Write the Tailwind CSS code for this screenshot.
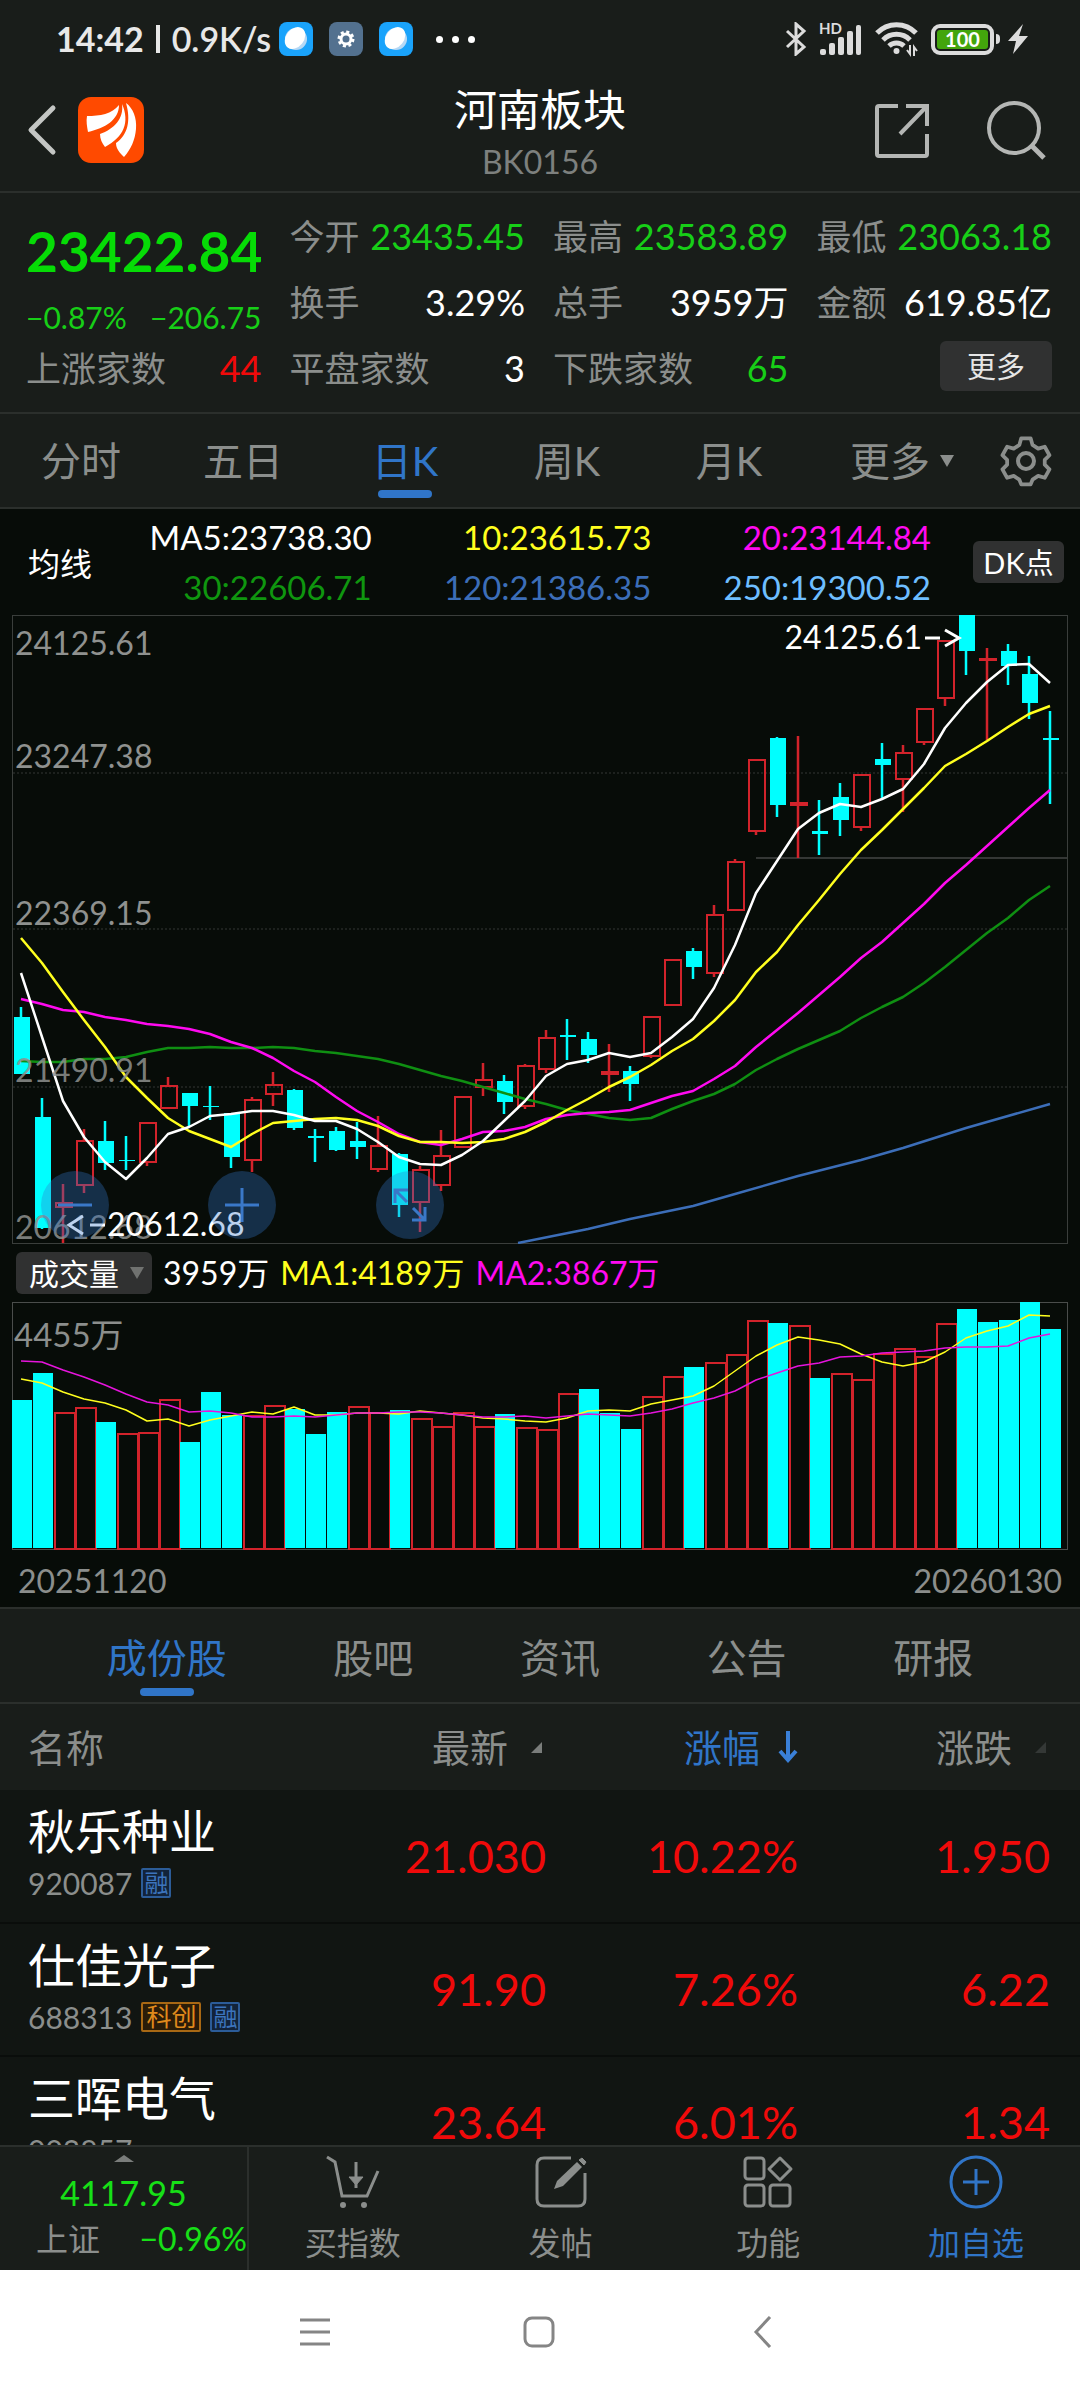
<!DOCTYPE html>
<html lang="zh-CN">

<head>
    <meta charset="UTF-8">
    <meta name="viewport" content="width=device-width, initial-scale=1.0">
    <title>河南板块 BK0156</title>
    <script src="https://cdn.jsdelivr.net/npm/@tailwindcss/browser@4"></script>
</head>

<body class="flex h-screen flex-col overflow-hidden bg-[#191d1a] font-['Lato','Noto_Sans_CJK_SC',sans-serif] leading-none text-[#8b8e8c]">

    <!-- Status bar -->
    <div class="flex h-[78px] shrink-0 items-center justify-between pr-[52px] pl-[56px] text-[#e8e8e8]">
        <div class="flex items-center">
            <span class="text-[34px] font-bold">14:42</span>
            <span class="mx-3 h-[28px] w-[4px] bg-[#e8e8e8]"></span>
            <span class="text-[34px] font-semibold">0.9K/s</span>
            <div class="ml-2 flex items-center gap-4">
                <svg class="size-[34px]" viewBox="0 0 34 34">
                    <rect width="34" height="34" rx="8" fill="#1aa3fb" />
                    <circle cx="17" cy="17" r="11" fill="#b5d8f5" />
                    <ellipse cx="16" cy="16" rx="9" ry="12" fill="#fff" transform="rotate(38 16 16)" />
                </svg>
                <svg class="size-[34px]" viewBox="0 0 34 34">
                    <rect width="34" height="34" rx="8" fill="#53718f" />
                    <circle cx="17" cy="17" r="5" fill="none" stroke="#fff" stroke-width="3" />
                    <circle cx="17" cy="17" r="7" fill="none" stroke="#fff" stroke-width="3" stroke-dasharray="3 2.5" />
                </svg>
                <svg class="size-[34px]" viewBox="0 0 34 34">
                    <rect width="34" height="34" rx="8" fill="#1aa3fb" />
                    <circle cx="17" cy="17" r="11" fill="#b5d8f5" />
                    <ellipse cx="16" cy="16" rx="9" ry="12" fill="#fff" transform="rotate(38 16 16)" />
                </svg>
            </div>
            <div class="ml-[23px] flex gap-[9px]">
                <span class="size-[7px] rounded-full bg-white"></span>
                <span class="size-[7px] rounded-full bg-white"></span>
                <span class="size-[7px] rounded-full bg-white"></span>
            </div>
        </div>
        <div class="flex items-center">
            <svg class="h-[34px] w-[22px]" viewBox="0 0 22 34" fill="none" stroke="#dcdcdc" stroke-width="3">
                <path d="M2 9l17 16-8 7V2l8 7L2 25" />
            </svg>
            <svg class="ml-3 h-[40px] w-[44px]" viewBox="0 0 44 40" fill="#dcdcdc">
                <text x="0" y="15" font-size="15" font-weight="700">HD</text>
                <rect x="1" y="30" width="6" height="6" rx="2" />
                <rect x="10" y="24" width="6" height="12" rx="2" />
                <rect x="19" y="18" width="6" height="18" rx="2" />
                <rect x="28" y="12" width="6" height="24" rx="2" />
                <rect x="37" y="6" width="5" height="30" rx="2" />
            </svg>
            <svg class="ml-3 h-[36px] w-[44px]" viewBox="0 0 44 36" fill="none" stroke="#dcdcdc" stroke-width="5">
                <path d="M2 12a27 27 0 0 1 39 0M8 19a19 19 0 0 1 27 0M14 25a11 11 0 0 1 15 0" />
                <circle cx="21.500" cy="30" r="2" fill="#dcdcdc" stroke-width="2" />
                <path d="M35 24v9l-3-4M39 35v-9l3 4" stroke-width="2" />
            </svg>
            <div class="ml-3 flex items-center">
                <div class="flex h-[31px] w-[63px] items-center justify-center rounded-[9px] border-[4px] border-[#dcdcdc] p-[2px]">
                    <div class="flex h-full w-full items-center justify-center rounded-[3px] bg-[#43a50c] text-[20px] font-bold text-white">100</div>
                </div>
                <span class="ml-[2px] h-[10px] w-[4px] rounded-r bg-[#dcdcdc]"></span>
            </div>
            <svg class="ml-2 h-[30px] w-[20px]" viewBox="0 0 20 30" fill="#dcdcdc">
                <path d="M15 0L0 17h8L5 30 20 12h-9z" />
            </svg>
        </div>
    </div>

    <!-- Title bar -->
    <header class="relative flex h-[115px] shrink-0 items-center justify-between border-b-2 border-[#2b2f2c] pr-[34px] pb-[9px] pl-[26px]">
        <div class="flex items-center gap-[20px]">
            <button type="button" aria-label="返回">
                <svg class="h-[54px] w-[32px]" viewBox="0 0 32 54" fill="none" stroke="#c4c6c4" stroke-width="5" stroke-linecap="round" stroke-linejoin="round">
                    <path d="M27 5L5 27l22 22" />
                </svg>
            </button>
            <a href="#" aria-label="首页">
                <svg class="size-[66px]" viewBox="0 0 66 66">
                    <rect width="66" height="66" rx="13" fill="#ff4a00" />
                    <g fill="#fff">
                        <path d="M9 19c13 0 25-2 32-11 0 15-14 23-31 27-1-5-2-11-1-16z" />
                        <path d="M44 7c8 18 2 33-17 43-3-4-5-8-5-13 14-5 24-15 22-30z" />
                        <path d="M48 6c7 5 11 15 10 26-1 11-5 20-12 28-4-4-8-8-8-14 12-8 15-23 10-40z" />
                    </g>
                </svg>
            </a>
        </div>
        <div class="absolute inset-x-0 top-[8px] flex flex-col items-center gap-[12px]">
            <h1 class="text-[43px] leading-[48px] text-white">河南板块</h1>
            <p class="text-[32px] leading-[32px] text-[#7d807e]">BK0156</p>
        </div>
        <div class="relative flex items-center gap-[56px]">
            <button type="button" aria-label="分享">
                <svg class="size-[56px]" viewBox="0 0 56 56" fill="none" stroke="#b4b6b4" stroke-width="4">
                    <path d="M24 4H5q-2 0-2 2v46q0 2 2 2h46q2 0 2-2V32M32 4h21v20M53 4L26 32" />
                </svg>
            </button>
            <button type="button" aria-label="搜索">
                <svg class="size-[60px]" viewBox="0 0 60 60" fill="none" stroke="#b4b6b4" stroke-width="4">
                    <circle cx="28" cy="28" r="25" />
                    <path d="M46 46l12 12" stroke-width="5" />
                </svg>
            </button>
        </div>
    </header>

    <!-- Quote -->
    <section class="grid h-[221px] shrink-0 grid-cols-4 gap-x-[28px] border-b-2 border-[#2b2f2c] pt-[10px] pr-[28px] pl-[26px] text-[35px]">
        <div class="flex flex-col">
            <div class="flex h-[96px] items-center text-[55px] font-bold text-[#06dc06]">23422.84</div>
            <div class="flex h-[36px] items-center justify-between text-[30px] text-[#17cf17]"><span>−0.87%</span><span>−206.75</span></div>
            <div class="flex h-[66px] items-center justify-between"><span>上涨家数</span><span class="text-[36px] text-[#f00a0a]">44</span></div>
        </div>
        <div class="flex flex-col">
            <div class="flex h-[66px] items-center justify-between"><span>今开</span><span class="text-[36px] text-[#17cf17]">23435.45</span></div>
            <div class="flex h-[66px] items-center justify-between"><span>换手</span><span class="text-[36px] text-white">3.29%</span></div>
            <div class="flex h-[66px] items-center justify-between"><span>平盘家数</span><span class="text-[36px] text-white">3</span></div>
        </div>
        <div class="flex flex-col">
            <div class="flex h-[66px] items-center justify-between"><span>最高</span><span class="text-[36px] text-[#17cf17]">23583.89</span></div>
            <div class="flex h-[66px] items-center justify-between"><span>总手</span><span class="text-[36px] text-white">3959<span class="text-[35px]">万</span></span></div>
            <div class="flex h-[66px] items-center justify-between"><span>下跌家数</span><span class="text-[36px] text-[#17cf17]">65</span></div>
        </div>
        <div class="flex flex-col">
            <div class="flex h-[66px] items-center justify-between"><span>最低</span><span class="text-[36px] text-[#17cf17]">23063.18</span></div>
            <div class="flex h-[66px] items-center justify-between"><span>金额</span><span class="text-[36px] text-white">619.85<span class="text-[35px]">亿</span></span></div>
            <div class="flex h-[62px] items-center justify-end">
                <button type="button" class="h-[50px] w-[112px] rounded-md bg-[#303131] text-[29px] text-[#e6e6e6]">更多</button>
            </div>
        </div>
    </section>

    <!-- Period tabs -->
    <nav class="flex h-[95px] shrink-0 items-stretch border-b-2 border-[#2b2f2c] text-[40px]">
        <div class="grid w-3/4 grid-cols-5">
            <button type="button">分时</button>
            <button type="button">五日</button>
            <button type="button" class="relative text-[#3075c8]">日K<span class="absolute inset-x-0 bottom-[9px] mx-auto h-[8px] w-[54px] rounded-full bg-[#3075c8]"></span></button>
            <button type="button">周K</button>
            <button type="button">月K</button>
        </div>
        <div class="flex flex-1 items-center justify-between pr-[28px] pl-[40px]">
            <button type="button" class="flex items-center gap-[10px]">更多
                <svg class="h-[12px] w-[14px]" viewBox="0 0 14 12" fill="#8b8e8c"><path d="M0 0h14L7 12z" /></svg>
            </button>
            <button type="button" aria-label="设置">
                <svg class="size-[52px]" viewBox="0 0 52 52" fill="none" stroke="#8b8e8c" stroke-width="4" stroke-linejoin="round">
                    <path d="M21 3h10l2 7 6 4 7-2 5 9-5 5v5l5 5-5 9-7-2-6 4-2 5H21l-2-5-6-4-7 2-5-9 5-5v-5l-5-5 5-9 7 2 6-4z" transform="translate(1.500 .5) scale(.94)" />
                    <circle cx="26" cy="26" r="8" />
                </svg>
            </button>
        </div>
    </nav>

    <main class="shrink-0 bg-[#070c08]">
        <!-- Moving averages -->
        <div class="flex h-[106px] items-center pr-[16px] pl-[28px] text-[33px]">
            <div class="w-[64px] pt-1 text-[32px] whitespace-nowrap text-white">均线</div>
            <div class="grid flex-1 grid-cols-3 text-right">
                <span class="leading-[50px] text-white">MA5:23738.30</span>
                <span class="leading-[50px] text-[#ffff1e]">10:23615.73</span>
                <span class="leading-[50px] text-[#ff0af0]">20:23144.84</span>
                <span class="leading-[50px] text-[#0f960f]">30:22606.71</span>
                <span class="leading-[50px] text-[#3c6eb8]">120:21386.35</span>
                <span class="leading-[50px] text-[#6ebeff]">250:19300.52</span>
            </div>
            <button type="button" class="ml-[42px] h-[42px] w-[91px] rounded-md bg-[#303131] text-[29px] text-white">DK点</button>
        </div>

        <!-- K-line chart -->
        <div class="relative">
            <svg id="kline" class="block h-auto w-full" viewBox="0 0 1080 629" fill="none">
                <rect x="12.500" y=".5" width="1055" height="628" stroke="#3a3e3b" />
                <path d="M13 158H1067M13 314H1067M13 472H1067" stroke="#1d211e" stroke-width="2" stroke-dasharray="2 2" />
                <path d="M756 243H1067" stroke="#343735" stroke-width="2" />
                <g id="candles"></g>
                <g id="averages" stroke-width="2.500" stroke-linejoin="round"></g>
                <g fill="#8f918f" font-size="32">
                    <text x="15" y="40">24125.61</text>
                    <text x="15" y="153">23247.38</text>
                    <text x="15" y="310">22369.15</text>
                    <text x="15" y="467" fill-opacity=".85">21490.91</text>
                    <text x="15" y="624" fill-opacity=".85">20612.68</text>
                </g>
                <g fill="#fff" font-size="32">
                    <text x="922" y="34" text-anchor="end">24125.61</text>
                    <text x="107" y="621">20612.68</text>
                </g>
                <path d="M925 23h15M945 15l14 8-14 8M105 610H90M83 601l-14 9 14 9" stroke="#fff" stroke-width="3" />
            </svg>
            <div class="absolute bottom-[5px] left-[41px] flex">
                <button type="button" aria-label="缩小" class="flex size-[68px] items-center justify-center rounded-full bg-[#3377cc]/33">
                    <svg class="size-[34px]" viewBox="0 0 34 34" stroke="#3a78c8" stroke-width="3"><path d="M0 17h34" /></svg>
                </button>
                <button type="button" aria-label="放大" class="ml-[99px] flex size-[68px] items-center justify-center rounded-full bg-[#3377cc]/33">
                    <svg class="size-[34px]" viewBox="0 0 34 34" stroke="#3a78c8" stroke-width="3"><path d="M0 17h34M17 0v34" /></svg>
                </button>
                <button type="button" aria-label="全屏" class="ml-[100px] flex size-[68px] items-center justify-center rounded-full bg-[#3377cc]/33">
                    <svg class="size-[34px]" viewBox="0 0 34 34" fill="none" stroke="#3a78c8" stroke-width="3"><path d="M2 15V2h13M2 2l12 12M32 19v13H19M32 32L20 20" /></svg>
                </button>
            </div>
        </div>

        <!-- Volume -->
        <div class="flex h-[58px] items-center gap-[11px] pl-[16px] text-[32px]">
            <div class="relative">
                <select aria-label="指标" class="block h-[42px] w-[136px] appearance-none rounded-md bg-[#303131] pl-[13px] text-[30px] leading-[42px] text-white">
                    <option>成交量</option>
                    <option>MACD</option>
                    <option>KDJ</option>
                </select>
                <svg class="pointer-events-none absolute top-[15px] right-[8px] h-[12px] w-[14px]" viewBox="0 0 14 12" fill="#707270"><path d="M0 0h14L7 12z" /></svg>
            </div>
            <span class="text-white">3959万</span>
            <span class="text-[#ffff1e]">MA1:4189万</span>
            <span class="text-[#ff0af0]">MA2:3867万</span>
        </div>
        <svg id="volume" class="block h-auto w-full" viewBox="0 0 1080 248" fill="none">
            <rect x="12.500" y=".5" width="1055" height="247" stroke="#4a4d4b" />
            <g id="bars"></g>
            <g id="volume-averages" stroke-width="1.500" stroke-linejoin="round"></g>
            <text x="14" y="45" font-size="33" fill="#8b8e8c">4455万</text>
        </svg>
        <div class="flex h-[59px] items-center justify-between border-b-2 border-[#2b2f2c] px-[18px] pt-1 text-[32px]">
            <span>20251120</span>
            <span>20260130</span>
        </div>
    </main>

    <!-- Section tabs -->
    <nav class="flex h-[95px] shrink-0 justify-evenly border-b-2 border-[#2b2f2c] text-[40px]">
        <button type="button" class="relative pt-1 text-[#3075c8]">成份股<span class="absolute inset-x-0 bottom-[6px] mx-auto h-[8px] w-[54px] rounded-full bg-[#3075c8]"></span></button>
        <button type="button" class="pt-1">股吧</button>
        <button type="button" class="pt-1">资讯</button>
        <button type="button" class="pt-1">公告</button>
        <button type="button" class="pt-1">研报</button>
    </nav>

    <!-- Constituent stocks -->
    <div class="min-h-0 flex-1 overflow-hidden bg-[#111512]">
        <table class="w-full table-fixed border-collapse text-right text-[45px] text-[#f00a0a]">
            <thead class="bg-[#191d1a] text-[38px] text-[#8b8e8c]">
                <tr class="h-[86px]">
                    <th class="w-[30%] pl-[28px] text-left font-normal">名称</th>
                    <th class="pr-[34px] font-normal">
                        <button type="button" class="inline-flex items-center gap-[23px]">最新<svg class="size-[11px]" viewBox="0 0 11 11" fill="#7a7d7b"><path d="M11 0v11H0z" /></svg></button>
                    </th>
                    <th class="pr-[30px] font-normal text-[#3075c8]">
                        <button type="button" class="inline-flex items-center gap-[18px]">涨幅<svg class="h-[32px] w-[20px]" viewBox="0 0 20 32" fill="none" stroke="#3a80d8" stroke-width="4"><path d="M10 0v28M2 20l8 9 8-9" /></svg></button>
                    </th>
                    <th class="pr-[34px] font-normal">
                        <button type="button" class="inline-flex items-center gap-[23px]">涨跌<svg class="size-[11px]" viewBox="0 0 11 11" fill="#343836"><path d="M11 0v11H0z" /></svg></button>
                    </th>
                </tr>
            </thead>
            <tbody>
                <tr class="h-[133px] border-b-2 border-[#0a0d0b]">
                    <td class="pl-[28px] text-left">
                        <div class="text-[47px] leading-[56px] text-white">秋乐种业</div>
                        <div class="mt-[9px] mb-[11px] flex h-[30px] items-center gap-[9px] text-[30px] text-[#8b8e8c]">920087
                            <span class="flex size-[30px] items-center justify-center rounded-xs border-2 border-[#2c5c98] bg-[#12233a] text-[24px] text-[#3c74bc]">融</span>
                        </div>
                    </td>
                    <td class="pr-[30px]">21.030</td>
                    <td class="pr-[30px]">10.22%</td>
                    <td class="pr-[30px]">1.950</td>
                </tr>
                <tr class="h-[133px] border-b-2 border-[#0a0d0b]">
                    <td class="pl-[28px] text-left">
                        <div class="text-[47px] leading-[56px] text-white">仕佳光子</div>
                        <div class="mt-[9px] mb-[11px] flex h-[30px] items-center gap-[9px] text-[30px] text-[#8b8e8c]">688313
                            <span class="flex h-[30px] w-[60px] items-center justify-center rounded-xs border-2 border-[#a86814] bg-[#2a1c08] text-[25px] text-[#e08a1c]">科创</span>
                            <span class="flex size-[30px] items-center justify-center rounded-xs border-2 border-[#2c5c98] bg-[#12233a] text-[24px] text-[#3c74bc]">融</span>
                        </div>
                    </td>
                    <td class="pr-[30px]">91.90</td>
                    <td class="pr-[30px]">7.26%</td>
                    <td class="pr-[30px]">6.22</td>
                </tr>
                <tr class="h-[133px] border-b-2 border-[#0a0d0b]">
                    <td class="pl-[28px] text-left">
                        <div class="text-[47px] leading-[56px] text-white">三晖电气</div>
                        <div class="mt-[9px] mb-[11px] flex h-[30px] items-center gap-[9px] text-[30px] text-[#8b8e8c]">002857</div>
                    </td>
                    <td class="pr-[30px]">23.64</td>
                    <td class="pr-[30px]">6.01%</td>
                    <td class="pr-[30px]">1.34</td>
                </tr>
            </tbody>
        </table>
    </div>

    <!-- Action bar -->
    <footer class="flex h-[125px] shrink-0 border-t-2 border-[#2b2f2c] text-[32px]">
        <a href="#" class="flex w-[249px] flex-col items-center border-r-2 border-[#2b2f2c] pt-[8px]">
            <svg class="h-[7px] w-[20px]" viewBox="0 0 20 7" fill="#7a7d7b"><path d="M10 0l10 7H0z" /></svg>
            <span class="mt-[13px] text-[34px] leading-[36px] text-[#17e017]">4117.95</span>
            <span class="flex h-[56px] w-full items-center justify-between pl-[36px] whitespace-nowrap"><span>上证</span><span class="text-[32px] text-[#17e017]">−0.96%</span></span>
        </a>
        <div class="grid flex-1 grid-cols-4">
            <button type="button" class="flex flex-col items-center gap-[15px] pt-[8px]">
                <svg class="size-[54px]" viewBox="0 0 54 54" fill="none" stroke="#8b8e8c" stroke-width="3">
                    <path d="M1 2l8 5 7 34h25l11-25M30 7v26" />
                    <path d="M23 22l7 8 7-8z" fill="#8b8e8c" stroke-width="1" />
                    <circle cx="17" cy="50" r="3" fill="#8b8e8c" stroke="none" />
                    <circle cx="38" cy="50" r="3" fill="#8b8e8c" stroke="none" />
                </svg>
                <span class="leading-[38px]">买指数</span>
            </button>
            <button type="button" class="flex flex-col items-center gap-[15px] pt-[8px]">
                <svg class="size-[54px]" viewBox="0 0 54 54" fill="none" stroke="#8b8e8c" stroke-width="3">
                    <path d="M37 3H10q-7 0-7 7v34q0 7 7 7h34q7 0 7-7V18" />
                    <path d="M20 34l3-8L43 7l5 5-19 19z" fill="#8b8e8c" stroke="none" />
                    <path d="M45 5l5 5 2-3-4-4z" fill="#8b8e8c" stroke-width="1" />
                </svg>
                <span class="leading-[38px]">发帖</span>
            </button>
            <button type="button" class="flex flex-col items-center gap-[15px] pt-[8px]">
                <svg class="size-[54px]" viewBox="0 0 54 54" fill="none" stroke="#8b8e8c" stroke-width="3">
                    <rect x="4" y="3" width="19" height="21" rx="3" />
                    <rect x="4" y="30" width="19" height="21" rx="3" />
                    <rect x="29" y="30" width="20" height="21" rx="3" />
                    <path d="M39 3l11 11-11 11-11-11z" stroke-linejoin="round" />
                </svg>
                <span class="leading-[38px]">功能</span>
            </button>
            <button type="button" class="flex flex-col items-center gap-[15px] pt-[8px] text-[#3075c8]">
                <svg class="size-[54px]" viewBox="0 0 54 54" fill="none" stroke="#3075c8" stroke-width="3">
                    <circle cx="27" cy="27" r="25" />
                    <path d="M14 27h26M27 14v26" />
                </svg>
                <span class="leading-[38px]">加自选</span>
            </button>
        </div>
    </footer>

    <!-- System navigation -->
    <div class="flex h-[130px] shrink-0 items-center justify-center gap-[192px] bg-white pr-[2px] pb-[6px]">
        <button type="button" aria-label="最近任务">
            <svg class="size-[32px]" viewBox="0 0 32 32" stroke="#858585" stroke-width="3"><path d="M1 4h30M1 16h30M1 28h30" /></svg>
        </button>
        <button type="button" aria-label="主屏幕">
            <svg class="size-[32px]" viewBox="0 0 32 32" fill="none" stroke="#858585" stroke-width="3"><rect x="2" y="2" width="28" height="28" rx="7" /></svg>
        </button>
        <button type="button" aria-label="后退">
            <svg class="size-[32px]" viewBox="0 0 32 32" fill="none" stroke="#858585" stroke-width="3"><path d="M23 1L9 16l14 15" /></svg>
        </button>
    </div>

    <script>
        const STEP = 21;
        const UP = '#d2232b';
        const DOWN = '#00ffff';

        // [direction, body top, body bottom, high, low]
        const candles = [
            ['d', 402, 459, 392, 459], ['d', 502, 613, 483, 614], ['u', 587, 593, 569, 628], ['u', 525, 571, 514, 578],
            ['d', 526, 548, 506, 555], ['d', 545, 546, 521, 555], ['u', 507, 548, 507, 551], ['u', 470, 494, 462, 494],
            ['d', 478, 491, 478, 512], ['d', 491, 492, 471, 505], ['d', 498, 542, 498, 553], ['u', 484, 546, 482, 557],
            ['u', 469, 480, 457, 491], ['d', 475, 513, 474, 515], ['d', 521, 523, 514, 547], ['d', 516, 535, 512, 536],
            ['d', 526, 532, 507, 544], ['u', 530, 555, 501, 557], ['d', 539, 590, 538, 602], ['u', 554, 588, 551, 617],
            ['u', 540, 571, 515, 576], ['u', 481, 533, 481, 533], ['u', 464, 473, 448, 481], ['d', 466, 487, 460, 499],
            ['u', 450, 492, 449, 494], ['u', 422, 455, 415, 458], ['d', 420, 422, 404, 445], ['d', 424, 440, 417, 448],
            ['u', 456, 460, 429, 477], ['d', 456, 469, 451, 486], ['u', 401, 442, 401, 443], ['u', 344, 391, 344, 391],
            ['d', 336, 352, 333, 364], ['u', 299, 359, 290, 362], ['u', 246, 296, 244, 296], ['u', 144, 217, 144, 220],
            ['d', 123, 190, 122, 202], ['u', 187, 191, 121, 243], ['d', 216, 219, 185, 240], ['d', 182, 205, 168, 221],
            ['u', 159, 213, 159, 216], ['d', 144, 150, 128, 183], ['u', 137, 165, 130, 197], ['u', 93, 128, 93, 130],
            ['u', 25, 84, 25, 91], ['d', 0, 36, 0, 60], ['u', 43, 46, 33, 125], ['d', 36, 51, 29, 70],
            ['d', 59, 88, 41, 104], ['d', 123, 125, 96, 189],
        ];

        const averages = {
            '#0f8f12': [446, 447, 447, 444, 444, 442, 437, 433, 433, 432, 433, 433, 432, 433, 436, 438, 441, 444, 449, 455, 461, 466, 472, 478, 484, 489, 495, 499, 503, 505, 503, 494, 486, 479, 469, 455, 444, 434, 425, 416, 403, 392, 382, 368, 352, 335, 318, 303, 285, 271],
            '#ff0af0': [384, 389, 395, 397, 402, 405, 409, 411, 414, 419, 427, 433, 443, 456, 467, 482, 496, 507, 519, 527, 530, 524, 517, 516, 512, 504, 500, 498, 497, 495, 488, 481, 476, 464, 451, 432, 415, 398, 380, 362, 343, 327, 308, 289, 268, 250, 231, 212, 193, 175],
            '#ffff1e': [323, 348, 377, 405, 432, 462, 483, 503, 516, 524, 532, 519, 508, 506, 504, 503, 505, 511, 521, 527, 527, 528, 527, 524, 517, 507, 495, 484, 472, 462, 450, 436, 424, 406, 385, 357, 337, 310, 285, 259, 235, 215, 194, 173, 151, 139, 126, 112, 99, 91],
            '#ffffff': [358, 422, 486, 522, 547, 564, 543, 519, 512, 501, 499, 496, 496, 500, 506, 506, 514, 527, 542, 549, 550, 540, 526, 506, 486, 461, 449, 445, 438, 442, 438, 422, 404, 373, 330, 278, 246, 214, 198, 189, 192, 184, 174, 149, 113, 88, 67, 50, 49, 68],
        };

        const volumes = 'd98 d71 u110 u105 d120 u131 u130 u97 d140 d90 d113 u113 u103 d107 d132 d110 u104 u110 d108 u116 u124 u110 u124 d112 u125 u127 u91 d87 d111 d127 u94 u74 d65 u60 u52 u18 d21 u23 d76 u71 u77 u51 u46 u54 u21 d7 d20 d18 d0 d27'.split(' ');

        const volumeAverages = {
            '#ffff1e': [77, 81, 90, 97, 101, 108, 119, 117, 124, 118, 114, 110, 112, 105, 113, 113, 111, 111, 112, 109, 111, 113, 116, 117, 119, 120, 116, 109, 108, 109, 102, 98, 94, 84, 69, 54, 43, 35, 38, 42, 52, 60, 64, 60, 50, 36, 29, 24, 13, 14],
            '#e614dc': [59, 60, 68, 75, 83, 92, 100, 103, 110, 109, 111, 115, 115, 114, 115, 113, 111, 111, 110, 110, 111, 113, 115, 115, 114, 116, 114, 112, 113, 114, 111, 107, 101, 96, 89, 78, 71, 64, 61, 55, 54, 51, 50, 49, 46, 45, 45, 44, 36, 32],
        };

        const line = (values, color) =>
            `<polyline stroke="${color}" points="${values.map((y, i) => `${STEP + i * STEP},${y}`).join(' ')}" />`;

        document.getElementById('candles').innerHTML = candles.map(([dir, top, bottom, high, low], i) => {
            const x = STEP + i * STEP;
            if (dir === 'd') {
                return `<path d="M${x} ${high}V${low}" stroke="${DOWN}" stroke-width="2.5" />
                    <rect x="${x - 7}" y="${top}" width="16" height="${bottom - top}" fill="${DOWN}" />`;
            }
            return `<path d="M${x} ${high}V${top}M${x} ${bottom}V${low}" stroke="${UP}" stroke-width="2.5" />
                <rect x="${x - 7}" y="${top + 1}" width="16" height="${Math.max(bottom - top - 2, 1)}" stroke="${UP}" stroke-width="2" />`;
        }).join('');

        document.getElementById('averages').innerHTML =
            '<polyline stroke="#3c6eb8" points="518,628 588,614 630,604 693,591 735,579 798,561 861,545 903,533 966,513 1050,489" />' +
            Object.entries(averages).map(([color, values]) => line(values, color)).join('');

        document.getElementById('bars').innerHTML = volumes.map((item, i) => {
            const x = 12 + i * STEP;
            const y = Number(item.slice(1));
            return item[0] === 'd'
                ? `<rect x="${x}" y="${y}" width="20" height="${246 - y}" fill="${DOWN}" />`
                : `<rect x="${x + 1}" y="${y + 1}" width="20" height="${246 - y}" stroke="${UP}" stroke-width="2" />`;
        }).join('');

        document.getElementById('volume-averages').innerHTML =
            Object.entries(volumeAverages).map(([color, values]) => line(values, color)).join('');
    </script>
</body>

</html>
